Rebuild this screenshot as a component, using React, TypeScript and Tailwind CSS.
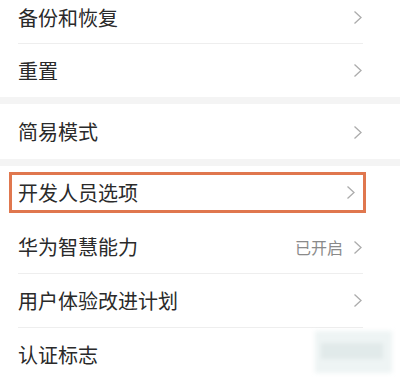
import React from "react";

function Chevron() {
  return (
    <svg width="10" height="15" viewBox="0 0 10 15" className="shrink-0">
      <polyline points="1.5,1.5 8,7.5 1.5,13.5" fill="none" stroke="#acacac" strokeWidth="1.3" />
    </svg>
  );
}

function Row({
  label,
  value,
  className = "",
  divider = false,
}: {
  label: string;
  value?: string;
  className?: string;
  divider?: boolean;
}) {
  return (
    <div
      className={`ml-[18px] mr-[37px] flex items-center justify-between ${
        divider ? "border-b border-[#eeeeee]" : ""
      } ${className}`}
    >
      <span className="text-[20px] leading-none text-[#2a2a2a]">{label}</span>
      <div className="flex items-center gap-[10px]">
        {value && <span className="text-[16px] leading-none text-[#8a8a8a]">{value}</span>}
        <Chevron />
      </div>
    </div>
  );
}

export default function App() {
  return (
    <div
      className="relative w-[400px] h-[387px] overflow-hidden bg-white"
      style={{ fontFamily: '"Noto Sans CJK SC", "Noto Sans", sans-serif' }}
    >
      <Row label="备份和恢复" divider className="h-[44px] pb-[8px]" />
      <Row label="重置" className="h-[53px]" />
      <div className="h-[7px] bg-[#f4f4f4]" />
      <Row label="简易模式" className="h-[55px] pt-[1px]" />
      <div className="h-[7px] bg-[#f4f4f4]" />

      {/* highlighted row */}
      <div className="h-[54px] pt-[6px]">
        <div className="ml-[9px] w-[357px] h-[41px] border-[3px] border-[#e0774e] flex items-center justify-between pl-[6px] pr-[7px]">
          <span className="text-[20px] leading-none text-[#2a2a2a]">开发人员选项</span>
          <Chevron />
        </div>
      </div>

      <Row label="华为智慧能力" value="已开启" divider className="h-[54px] pt-[1px]" />
      <Row label="用户体验改进计划" divider className="h-[54px]" />
      <div className="ml-[18px] h-[54px] flex items-center">
        <span className="text-[20px] leading-none text-[#2a2a2a]">认证标志</span>
      </div>

      {/* blurred watermark */}
      <div className="absolute left-[315px] top-[331px] w-[77px] h-[42px] bg-[#eef4f4] blur-[2px]">
        <div className="mt-[12px] ml-[6px] w-[62px] h-[16px] bg-[#e1eaea]" />
      </div>
    </div>
  );
}
